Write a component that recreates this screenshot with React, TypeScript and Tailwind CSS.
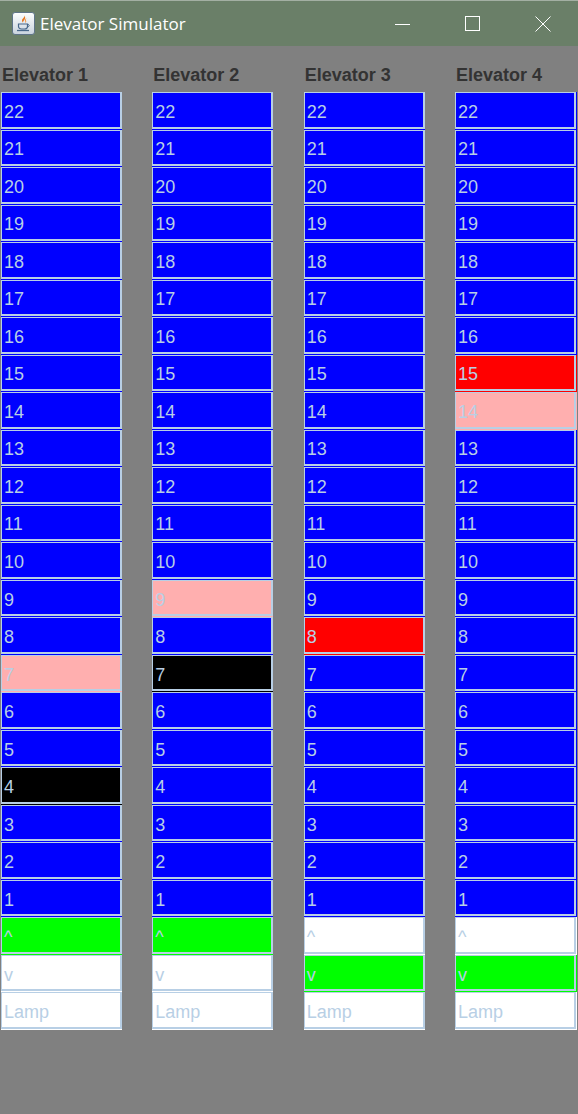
import React from "react";

const floors = Array.from({ length: 22 }, (_, i) => String(22 - i));
const labels = [...floors, "^", "v", "Lamp"];

const fills: Record<string, string> = {
  blue: "bg-[#0000ff]",
  pink: "bg-[#ffafaf]",
  black: "bg-black",
  red: "bg-[#ff0000]",
  green: "bg-[#00ff00]",
  white: "bg-white",
};

const elevators: { name: string; last?: boolean; lit: Record<string, string> }[] = [
  { name: "Elevator 1", lit: { "7": "pink", "4": "black", "^": "green" } },
  { name: "Elevator 2", lit: { "9": "pink", "7": "black", "^": "green" } },
  { name: "Elevator 3", lit: { "8": "red", v: "green" } },
  { name: "Elevator 4", last: true, lit: { "15": "red", "14": "pink", v: "green" } },
];

const JavaIcon = () => (
  <svg width="23" height="23" viewBox="0 0 23 23" className="shrink-0">
    <defs>
      <linearGradient id="tile" x1="0" y1="0" x2="0" y2="1">
        <stop offset="0" stopColor="#fdfefe" />
        <stop offset="1" stopColor="#c9d3de" />
      </linearGradient>
    </defs>
    <rect x="0.5" y="0.5" width="22" height="22" rx="2.5" fill="url(#tile)" stroke="#5f7488" />
    <path d="M12.5 3c1 2-2.5 3.5-2.5 5.5 0 1 .6 1.6 1 2-.2-1.6 3.6-3 1.5-7.500z" fill="#e8761e" />
    <path d="M14.500 6c-1.500 1-2 2-1.300 3.500.3.500.2 1-.2 1.500 1.500-.7 1.500-1.800 1-2.600-.4-.7 0-1.500.5-2.400z" fill="#f09a4a" />
    <path d="M6.500 12h9v2.500c0 1.500-1.500 2.500-3 2.500h-3c-1.500 0-3-1-3-2.500z" fill="none" stroke="#48678a" strokeWidth="1.200" />
    <path d="M15.500 12.500c2 -.5 2.500 2 0 2.500" fill="none" stroke="#48678a" strokeWidth="1" />
    <path d="M5 18.500h12" stroke="#48678a" strokeWidth="1.300" />
  </svg>
);

const Cell = ({ label, fill, last }: { label: string; fill: string; last?: boolean }) => (
  <div className={`${fills[fill]} pb-px ${last ? "pr-px" : ""} min-h-0`}>
    <div
      className={`h-full flex items-center pl-[2px] pt-[4px] border-t border-l border-r-2 border-b-2 border-[#b8cfe5] text-[18px] leading-none text-[#b8cfe5]`}
    >
      {label}
    </div>
  </div>
);

export default function App() {
  return (
    <div className="h-screen w-full bg-[#808080] overflow-hidden font-['Liberation_Sans',sans-serif]">
      {/* Title bar */}
      <div className="h-[46px] flex items-center bg-[#6a7f68] border-t border-[#a3afa3] text-white pl-3">
        <JavaIcon />
        <span className="ml-[5px] text-[17px] font-['Open_Sans',sans-serif]">Elevator Simulator</span>
        <div className="ml-auto flex">
          <div className="w-[70px] h-[44px] flex items-center justify-center">
            <svg width="16" height="16" viewBox="0 0 16 16">
              <path d="M0 8.500h15" stroke="white" />
            </svg>
          </div>
          <div className="w-[70px] h-[44px] flex items-center justify-center">
            <svg width="16" height="16" viewBox="0 0 16 16">
              <rect x="0.500" y="0.500" width="14" height="14" fill="none" stroke="white" />
            </svg>
          </div>
          <div className="w-[70px] h-[44px] flex items-center justify-center">
            <svg width="16" height="16" viewBox="0 0 16 16">
              <path d="M0.500 0.500l15 15M15.500 0.500l-15 15" stroke="white" />
            </svg>
          </div>
        </div>
      </div>

      {/* Elevator columns */}
      <div className="flex justify-between pl-px pr-px">
        {elevators.map((el) => (
          <div key={el.name} className={el.last ? "w-[122px]" : "w-[121px]"}>
            <div className="h-[46px] flex items-center pl-px pt-[13px] text-[18px] font-bold text-[#333333] whitespace-nowrap">
              {el.name}
            </div>
            <div className="grid grid-rows-[repeat(25,1fr)] h-[938px]">
              {labels.map((label, i) => (
                <Cell
                  key={label}
                  label={label}
                  last={el.last}
                  fill={el.lit[label] ?? (i < 22 ? "blue" : "white")}
                />
              ))}
            </div>
          </div>
        ))}
      </div>
    </div>
  );
}
